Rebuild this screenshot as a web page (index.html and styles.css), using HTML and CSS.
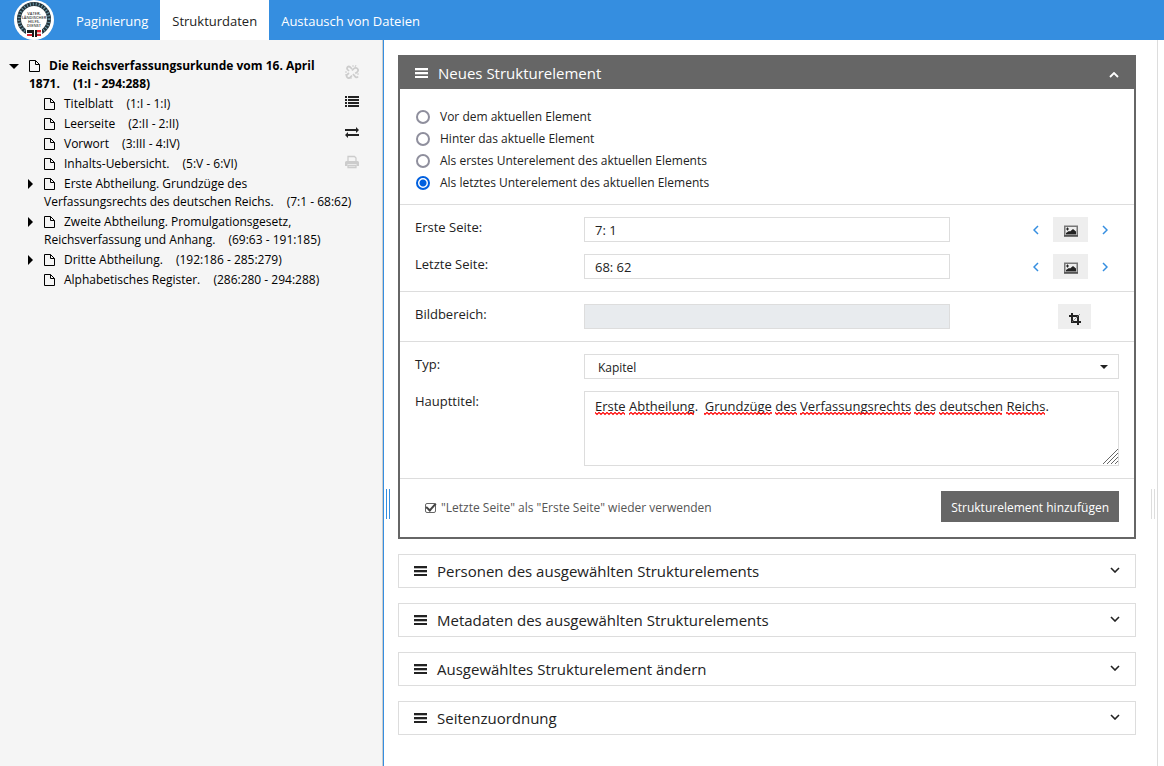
FILE: index.html
```
<!DOCTYPE html>
<html lang="de">
<head>
    <meta charset="utf-8">
    <title>Strukturdaten</title>
    <link rel="stylesheet" href="styles.css">
</head>
<body>
    <!-- shared icons -->
    <svg class="sprite" aria-hidden="true">
        <symbol id="page" viewBox="0 0 12 14"><path d="M.5 1.500h6l4 4v7H.5zM6.500 1.500v4h4" fill="none" stroke="currentColor"/></symbol>
        <symbol id="bars" viewBox="0 0 13 12"><path d="M0 1h13v2H0zM0 5h13v2H0zM0 9h13v2H0z" fill="currentColor"/><path d="M0 3.500h13M0 7.500h13" stroke="currentColor" opacity=".3"/></symbol>
        <symbol id="down" viewBox="0 0 10 6"><path d="M1 1l4 4 4-4" fill="none" stroke="currentColor" stroke-width="1.600"/></symbol>
        <symbol id="up" viewBox="0 0 10 6"><path d="M1 5l4-4 4 4" fill="none" stroke="currentColor" stroke-width="1.800"/></symbol>
        <symbol id="left" viewBox="0 0 6 10"><path d="M5 1L1 5l4 4" fill="none" stroke="currentColor" stroke-width="1.500"/></symbol>
        <symbol id="right" viewBox="0 0 6 10"><path d="M1 1l4 4-4 4" fill="none" stroke="currentColor" stroke-width="1.500"/></symbol>
        <symbol id="image" viewBox="0 0 14 12"><path d="M.75 1.250h12.500v9.500H.75z" fill="#eee" stroke="#777" stroke-width="1.500"/><path d="M0 11h14" stroke="#333"/><path d="M2 9.500h10V6.500L9 4 6 6.500 5 6 2 8z" fill="#222"/><path d="M2 4h3M3.500 2.500v3" stroke="#222"/></symbol>
    </svg>

    <header class="topbar">
        <a class="logo" href="#" aria-label="Startseite">
            <svg viewBox="0 0 40 40" width="40" height="40">
                <circle cx="20" cy="20" r="20" fill="#fff"/>
                <circle cx="20" cy="19" r="15" fill="none" stroke="#22313a" stroke-width="4"/>
                <circle cx="20" cy="19" r="15" fill="none" stroke="#6f9cab" stroke-width="3" stroke-dasharray="1 2"/>
                <rect x="12" y="29" width="16" height="9" fill="#fff"/>
                <path d="M13 30h5v3h-5zM18 30h2v7h-2zM21 30h2v7h-2z" fill="#1a1a1a"/>
                <path d="M13 34h5v2h-5zM23 30h4v2h-4zM23 34h4v2h-4z" fill="#d8222f"/>
                <path d="M23 32h4v1.500h-4z" fill="#eaa"/>
                <g class="logo-text"><text x="20" y="15">VATER-</text><text x="20" y="19">LÄNDISCHER</text><text x="20" y="23">HILFS-</text><text x="20" y="27">DIENST</text></g>
            </svg>
        </a>
        <nav class="tabs">
            <a href="#">Paginierung</a>
            <a href="#" class="active">Strukturdaten</a>
            <a href="#">Austausch von Dateien</a>
        </nav>
    </header>

    <main class="layout">
        <aside class="structure">
            <ul class="tree">
                <li class="root open"><svg class="page"><use href="#page"/></svg><b>Die Reichsverfassungsurkunde vom 16. April 1871.&nbsp;<span class="range">(1:I - 294:288)</span></b>
                    <ul>
                        <li><svg class="page"><use href="#page"/></svg>Titelblatt&nbsp;<span class="range">(1:I - 1:I)</span></li>
                        <li><svg class="page"><use href="#page"/></svg>Leerseite&nbsp;<span class="range">(2:II - 2:II)</span></li>
                        <li><svg class="page"><use href="#page"/></svg>Vorwort&nbsp;<span class="range">(3:III - 4:IV)</span></li>
                        <li><svg class="page"><use href="#page"/></svg>Inhalts-Uebersicht.&nbsp;<span class="range">(5:V - 6:VI)</span></li>
                        <li class="closed"><svg class="page"><use href="#page"/></svg>Erste Abtheilung. Grundzüge des Verfassungsrechts des deutschen Reichs.&nbsp;<span class="range">(7:1 - 68:62)</span></li>
                        <li class="closed"><svg class="page"><use href="#page"/></svg>Zweite Abtheilung. Promulgationsgesetz, Reichsverfassung und Anhang.&nbsp;<span class="range">(69:63 - 191:185)</span></li>
                        <li class="closed"><svg class="page"><use href="#page"/></svg>Dritte Abtheilung.&nbsp;<span class="range">(192:186 - 285:279)</span></li>
                        <li><svg class="page"><use href="#page"/></svg>Alphabetisches Register.&nbsp;<span class="range">(286:280 - 294:288)</span></li>
                    </ul>
                </li>
            </ul>
            <div class="tools">
                <button aria-label="Verknüpfung lösen" disabled><svg viewBox="0 0 14 14"><path d="M4 6L2.500 4.500a2 2 0 0 1 0-2.500 2 2 0 0 1 2.500 0L7 4M7 5.500l2-2a2.300 2.300 0 0 1 3.300 3.300l-2 1.700M4 8l-1.700 1.500a2 2 0 0 0 2.900 2.900L7 10.500M8 9l2.500 3q1.500 1 2.500-.5" fill="none" stroke="currentColor" stroke-width="1.700"/><path d="M8 0v2M11 0l-1 2M0 7h2M0 10l2-.5M12 9h2M6 12v2" stroke="currentColor" fill="none"/></svg></button>
                <button aria-label="Liste"><svg viewBox="0 0 14 14"><path d="M0 1h2v2H0zM3 1h11v2H3zM0 4h2v2H0zM3 4h11v2H3zM0 7h2v2H0zM3 7h11v2H3zM0 10h2v2H0zM3 10h11v2H3z" fill="currentColor"/></svg></button>
                <button aria-label="Tauschen"><svg viewBox="0 0 14 14"><path d="M0 4h11V2l3 3-3 3V6H0zM14 9H3V7l-3 3 3 3v-2h11z" fill="currentColor"/></svg></button>
                <button aria-label="Drucken" disabled><svg viewBox="0 0 14 14"><path d="M3 6V1.500h6.500l1.500 1.500v3M3 10.500v2h8v-2z" fill="none" stroke="currentColor" stroke-width="1.300"/><path d="M0 7.500Q0 6 1.500 6h11Q14 6 14 7.500V11h-2.500V9h-9v2H0z" fill="currentColor"/></svg></button>
            </div>
        </aside>

        <div class="splitter active"></div>

        <section class="panels">
            <form class="panel">
                <h2 class="panel-head"><svg class="bars"><use href="#bars"/></svg>Neues Strukturelement<svg class="chevron"><use href="#up"/></svg></h2>
                <div class="block positions">
                    <label><input type="radio" name="position">Vor dem aktuellen Element</label>
                    <label><input type="radio" name="position">Hinter das aktuelle Element</label>
                    <label><input type="radio" name="position">Als erstes Unterelement des aktuellen Elements</label>
                    <label><input type="radio" name="position" checked>Als letztes Unterelement des aktuellen Elements</label>
                </div>
                <div class="block">
                    <div class="row">
                        <label for="first">Erste Seite:</label>
                        <input class="field" id="first" type="text" value="7: 1">
                        <div class="pager">
                            <button type="button" class="step" aria-label="Zurück"><svg><use href="#left"/></svg></button>
                            <button type="button" class="tile" aria-label="Bild"><svg><use href="#image"/></svg></button>
                            <button type="button" class="step" aria-label="Weiter"><svg><use href="#right"/></svg></button>
                        </div>
                    </div>
                    <div class="row">
                        <label for="last">Letzte Seite:</label>
                        <input class="field" id="last" type="text" value="68: 62">
                        <div class="pager">
                            <button type="button" class="step" aria-label="Zurück"><svg><use href="#left"/></svg></button>
                            <button type="button" class="tile" aria-label="Bild"><svg><use href="#image"/></svg></button>
                            <button type="button" class="step" aria-label="Weiter"><svg><use href="#right"/></svg></button>
                        </div>
                    </div>
                </div>
                <div class="block">
                    <div class="row">
                        <label for="area">Bildbereich:</label>
                        <input class="field" id="area" type="text" disabled>
                        <div class="pager crop">
                            <button type="button" class="tile" aria-label="Zuschneiden"><svg viewBox="0 0 12 12"><path d="M0 3h9v9M3 0v9h9" fill="none" stroke="currentColor" stroke-width="2"/><path d="M3 9l8-8" stroke="#777" stroke-width=".8"/></svg></button>
                        </div>
                    </div>
                </div>
                <div class="block">
                    <div class="row">
                        <label for="type">Typ:</label>
                        <div class="select-wrap wide">
                            <select class="field" id="type"><option>Kapitel</option></select>
                        </div>
                    </div>
                    <div class="row">
                        <label for="title">Haupttitel:</label>
                        <div class="text-wrap wide">
                            <textarea class="field" id="title" spellcheck="false">Erste Abtheilung.  Grundzüge des Verfassungsrechts des deutschen Reichs.</textarea>
                            <svg class="spelling" viewBox="0 0 460 4" width="460" height="4" aria-hidden="true">
                                <defs><pattern id="wave" width="4" height="4" patternUnits="userSpaceOnUse"><path d="M-1 -.5l3 3 3-3" fill="none" stroke="red" stroke-width="1.200"/></pattern></defs>
                                <path d="M0 0h30v4H0zM34 0h65v4H34zM109 0h68v4h-68zM180 0h22v4h-22zM205 0h111v4H205zM319 0h21v4h-21zM344 0h63v4h-63zM411 0h39v4h-39z" fill="url(#wave)"/>
                            </svg>
                            <svg class="grip" viewBox="0 0 15 15" aria-hidden="true"><path d="M0 15L15 0M4 15L15 4M8 15l7-7M12 15l3-3" stroke="#666"/></svg>
                        </div>
                    </div>
                </div>
                <div class="block actions">
                    <label class="reuse"><input type="checkbox" checked>"Letzte Seite" als "Erste Seite" wieder verwenden</label>
                    <button type="button" class="submit">Strukturelement hinzufügen</button>
                </div>
            </form>

            <button class="collapsed"><svg class="bars"><use href="#bars"/></svg>Personen des ausgewählten Strukturelements<svg class="chevron"><use href="#down"/></svg></button>
            <button class="collapsed"><svg class="bars"><use href="#bars"/></svg>Metadaten des ausgewählten Strukturelements<svg class="chevron"><use href="#down"/></svg></button>
            <button class="collapsed"><svg class="bars"><use href="#bars"/></svg>Ausgewähltes Strukturelement ändern<svg class="chevron"><use href="#down"/></svg></button>
            <button class="collapsed"><svg class="bars"><use href="#bars"/></svg>Seitenzuordnung<svg class="chevron"><use href="#down"/></svg></button>
        </section>

        <div class="splitter right"></div>
    </main>
</body>
</html>
```
FILE: styles.css
```
*, *::before, *::after {
    box-sizing: border-box;
}
body {
    margin: 0;
    min-height: 100vh;
    display: flex;
    flex-direction: column;
    font: 12px/18px "Open Sans", sans-serif;
    color: #222;
    background: #fff;
}
button, input, select, textarea {
    font: inherit;
    color: inherit;
    margin: 0;
    border-radius: 0;
}
button {
    border: 0;
    padding: 0;
    background: none;
    cursor: pointer;
}
.sprite {
    display: none;
}

/* top bar */
.topbar {
    display: flex;
    height: 40px;
    padding-left: 14px;
    background: #358ee0;
}
.logo {
    width: 50px;
}
.logo-text {
    font-size: 4px;
    font-weight: 600;
    text-anchor: middle;
    fill: #333;
}
.tabs {
    display: flex;
}
.tabs a {
    padding: 0 12px;
    font-size: 13px;
    line-height: 42px;
    color: #fff;
    text-decoration: none;
}
.tabs a.active {
    background: #fff;
    color: #222;
}

.layout {
    flex: 1;
    display: flex;
    padding-right: 6px;
}

/* structure tree */
.structure {
    flex: 0 0 auto;
    width: 33vw;
    max-width: 383px;
    display: flex;
    align-items: flex-start;
    background: #f5f5f5;
    border-right: 1px solid #ccc;
    color: #000;
}
.tree, .tree ul {
    list-style: none;
    margin: 0;
    padding: 0;
}
.tree {
    width: 352px;
    margin-right: -7px;
    padding: 17px 0 0 29px;
}
.tree ul {
    padding: 2px 0 0 15px;
}
.tree li {
    position: relative;
    padding-bottom: 2px;
}
.root > b {
    font-weight: 700;
}
.tree .page {
    width: 12px;
    height: 14px;
    margin-right: 8px;
    vertical-align: -3px;
}
.range {
    margin-left: 10px;
    white-space: nowrap;
}
.open::before, .closed::before {
    content: "";
    position: absolute;
    top: 7px;
    left: -20px;
    border: 5px solid transparent;
    border-top-color: #000;
    border-bottom: 0;
}
.closed::before {
    top: 4px;
    left: -16px;
    border: 5px solid transparent;
    border-left-color: #000;
    border-right: 0;
}
.tools {
    display: flex;
    flex-direction: column;
    gap: 16px;
    padding-top: 25px;
}
.tools button, .tools svg {
    display: block;
    width: 14px;
    height: 14px;
}
.tools button {
    color: #222;
}
.tools button:disabled {
    color: #ccc;
}

/* splitters */
.splitter {
    display: flex;
    align-items: center;
    width: 15px;
    padding-top: 202px;
    border-left: 1px solid #358ee0;
}
.splitter::before {
    content: "";
    width: 4px;
    height: 30px;
    margin: 0 2px;
    border: solid #358ee0;
    border-width: 0 1px;
}
.splitter.right {
    width: 22px;
    justify-content: flex-end;
    border-left: 0;
    border-right: 1px solid #ddd;
}
.splitter.right::before {
    border-color: #ddd;
}

/* panels */
.panels {
    flex: 1;
    padding: 15px 0;
    display: flex;
    flex-direction: column;
    gap: 15px;
}
.panel {
    border: 2px solid #666;
    border-top: 0;
}
.panel-head, .collapsed {
    display: flex;
    align-items: center;
    width: 100%;
    height: 34px;
    margin: 0;
    font-size: 15px;
    font-weight: normal;
}
.panel-head {
    padding: 2px 15px 0;
    background: #666;
    color: #fff;
}
.collapsed {
    padding: 0 15px;
    border: 1px solid #ddd;
}
.bars {
    width: 13px;
    height: 12px;
    margin-right: 10px;
}
.chevron {
    width: 10px;
    height: 6px;
    margin-left: auto;
}
.panel-head .chevron {
    margin-top: 4px;
}
.collapsed .chevron {
    margin-bottom: 2px;
}
.block {
    display: flex;
    flex-direction: column;
    gap: 12px;
    padding: 12px 15px;
    border-top: 1px solid #ddd;
}
.positions {
    gap: 0;
    padding: 17px 16px 10px;
    border-top: 0;
}
.positions label {
    display: flex;
    align-items: center;
    gap: 10px;
    height: 22px;
}
.positions input {
    appearance: none;
    width: 14px;
    height: 14px;
    border: 2px solid #8f8f9d;
    border-radius: 50%;
}
.positions input:checked {
    border-color: #0060df;
    background: radial-gradient(#0060df 3px, #fff 4px);
}
.row {
    display: flex;
    font-size: 13px;
}
.row > label {
    flex: 0 0 24%;
    line-height: 20px;
}
.field {
    display: block;
    flex: 0 0 52%;
    width: 100%;
    height: 25px;
    padding: 0 10px;
    border: 1px solid #ddd;
    background: #fff;
}
.field:disabled {
    background: #e8ebee;
}
.wide {
    position: relative;
    flex: 1;
}
select.field {
    appearance: none;
    padding: 2px 10px 0 13px;
    font-size: 12px;
}
.select-wrap::after {
    content: "";
    position: absolute;
    top: 11px;
    right: 11px;
    border: 4px solid transparent;
    border-top-color: #222;
    border-bottom: 0;
}
textarea.field {
    height: 75px;
    padding-top: 5px;
    resize: none;
}
.spelling {
    position: absolute;
    left: 11px;
    top: 21px;
}
.grip {
    position: absolute;
    right: 1px;
    bottom: 2px;
    width: 15px;
    height: 15px;
}
.pager {
    flex: 1;
    display: flex;
    justify-content: flex-end;
    align-items: center;
    gap: 14px;
    padding-right: 11px;
}
.step {
    width: 6px;
    color: #358ee0;
}
.step svg {
    display: block;
    width: 6px;
    height: 10px;
}
.tile {
    display: flex;
    align-items: center;
    justify-content: center;
    width: 35px;
    height: 25px;
    padding-top: 2px;
    background: #eee;
}
.tile svg {
    width: 14px;
    height: 12px;
}
.crop {
    padding-right: 28px;
}
.crop .tile {
    width: 33px;
    padding-top: 4px;
}
.actions {
    flex-direction: row;
    justify-content: space-between;
    align-items: center;
    padding-bottom: 15px;
}
.reuse {
    display: flex;
    align-items: center;
    gap: 5px;
    padding: 2px 0 0 10px;
    color: #555;
}
.reuse input {
    appearance: none;
    position: relative;
    width: 11px;
    height: 10px;
    border: 1px solid #666;
    border-radius: 2px;
}
.reuse input:checked::after {
    content: "";
    position: absolute;
    left: 2px;
    top: -3px;
    width: 6px;
    height: 10px;
    border: solid #444;
    border-width: 0 2px 2px 0;
    transform: rotate(42deg);
}
.submit {
    height: 31px;
    padding: 2px 10px 0;
    background: #666;
    color: #fff;
}
```
